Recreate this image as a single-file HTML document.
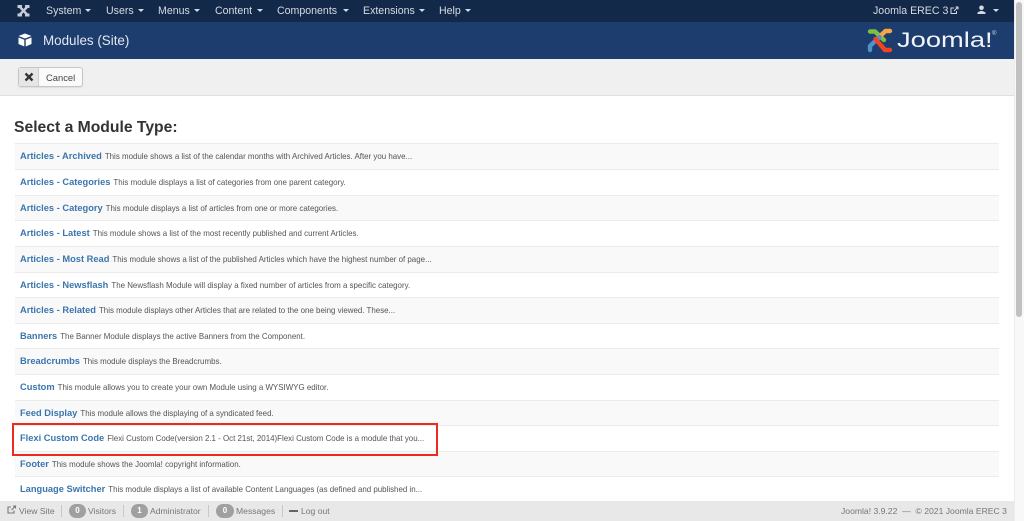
<!DOCTYPE html>
<html><head><meta charset="utf-8"><style>
html,body{margin:0;padding:0;width:1024px;height:521px;overflow:hidden;background:#fff;font-family:"Liberation Sans",sans-serif}
#w{position:absolute;left:0;top:0;width:1024px;height:521px;overflow:hidden;filter:blur(.35px)}
.a{position:absolute;white-space:nowrap}
#top{position:absolute;left:0;top:0;width:1014px;height:22px;background:#13294a}
#hdr{position:absolute;left:0;top:22px;width:1014px;height:37px;background:#1c3d6e}
#bar{position:absolute;left:0;top:59px;width:1014px;height:37px;background:#f0f0f0;border-bottom:1px solid #e0e0e0;box-sizing:border-box}
#sb{position:absolute;left:1014px;top:0;width:10px;height:521px;background:#f8f8f8;border-left:1px solid #ececec;box-sizing:border-box}
#th{position:absolute;left:1016px;top:2px;width:6px;height:315px;background:#c1c1c1;border-radius:3px}
.m{color:#d5dae2;font-size:10.6px;top:4px;line-height:14px}
.c{position:absolute;top:9px;width:0;height:0;border-left:3px solid transparent;border-right:3px solid transparent;border-top:3px solid #d5dae2}
.row{position:absolute;left:15px;width:984px;height:26px;border-top:1px solid #ebebeb;box-sizing:border-box;line-height:25px;padding-left:5px;white-space:nowrap;font-size:7.93px;color:#555}
.row.o{background:#f9f9f9}
.row b{font-size:9.3px;color:#3a76ad;margin-right:3px}
#ft{position:absolute;left:0;top:501px;width:1014px;height:20px;background:#e8e8e8;font-size:8.6px;color:#777}
.ft{position:absolute;top:5px;line-height:11px;white-space:nowrap}
.bd{position:absolute;top:3px;height:14px;border-radius:7px;background:#a0a0a0;color:#fff;text-align:center;line-height:14px;font-size:8px;font-weight:bold}
.sep{position:absolute;top:4px;width:1px;height:12px;background:#c8c8c8}
</style></head><body><div id="w">
<div id="top"></div><div id="hdr"></div><div id="bar"></div>
<div id="sb"></div><div id="th"></div>

<svg class="a" style="left:17px;top:4px" width="13" height="14" viewBox="0 0 13 14"><g fill="none" stroke="#c5ccd6" stroke-width="2.4"><path d="M2.500 2.500 L10.500 11 M10.500 2.500 L2.500 11"/></g><g fill="#c5ccd6"><rect x="0.500" y="1" width="4.500" height="3"/><rect x="8" y="1" width="4.500" height="3"/><rect x="0.500" y="9.500" width="4.500" height="3"/><rect x="8" y="9.500" width="4.500" height="3"/></g></svg>

<span class="a m" style="left:46px">System</span><i class="c" style="left:85px"></i>
<span class="a m" style="left:106px">Users</span><i class="c" style="left:138px"></i>
<span class="a m" style="left:158px">Menus</span><i class="c" style="left:194px"></i>
<span class="a m" style="left:215px">Content</span><i class="c" style="left:257px"></i>
<span class="a m" style="left:277px">Components</span><i class="c" style="left:343px"></i>
<span class="a m" style="left:363px">Extensions</span><i class="c" style="left:419px"></i>
<span class="a m" style="left:439px">Help</span><i class="c" style="left:465px"></i>

<span class="a m" style="left:873px">Joomla EREC 3</span>
<svg class="a" style="left:950px;top:6px" width="9" height="9" viewBox="0 0 9 9"><path d="M6.500 5v2.500h-5.500v-5.500h3M4 5l4-4M5.500 1h2.500v2.500" fill="none" stroke="#d5dae2" stroke-width="1"/></svg>
<svg class="a" style="left:977px;top:5px" width="9" height="10" viewBox="0 0 9 10"><circle cx="4.500" cy="2.800" r="2.300" fill="#d5dae2"/><path d="M0.500 9 v-1.500 l2.800-1.500 h2.400 l2.800 1.500 V9z" fill="#d5dae2"/></svg>
<i class="c" style="left:993px"></i>

<svg class="a" style="left:18px;top:33px" width="14" height="14" viewBox="0 0 14 14"><path d="M7 .5 L13.500 3 L7 5.500 L.5 3Z" fill="#fff"/><path d="M.5 4.500 L6.300 6.800 V13.500 L.5 11Z M13.500 4.500 L7.700 6.800 V13.500 L13.500 11Z" fill="#fff"/></svg>
<span class="a" style="left:43px;top:33px;font-size:13.4px;line-height:16px;color:#e4e8ee">Modules (Site)</span>

<svg class="a" style="left:866px;top:26px" width="28" height="28" viewBox="0 0 28 28"><g fill="none" stroke-width="4.400" stroke-linecap="round" stroke-linejoin="round"><path d="M4 5.500 L9 5.500 L18 14" stroke="#7ac143"/><path d="M24 5 L19.500 5 L10 14" stroke="#f9a541"/><path d="M4 24 L4 20 L13.500 11" stroke="#5091cd"/><path d="M24 24 L19 24 L9.500 13" stroke="#f44321"/></g></svg>
<span class="a" style="left:897px;top:28px;font-size:21px;line-height:26px;color:#f2f4f7;transform-origin:0 50%;transform:scaleX(1.3)">Joomla!</span>
<span class="a" style="left:992px;top:31px;font-size:6px;line-height:7px;color:#cfd6e0">®</span>

<div class="a" style="left:18px;top:67px;width:65px;height:20px;border:1px solid #c6c6c6;border-radius:3px;background:#fafafa;box-shadow:0 1px 1px rgba(0,0,0,.08);box-sizing:border-box"></div>
<div class="a" style="left:19px;top:68px;width:20px;height:18px;background:#e6e6e6;border-right:1px solid #cfcfcf;box-sizing:border-box"></div>
<svg class="a" style="left:24px;top:72px" width="10" height="10" viewBox="0 0 10 10"><path d="M1.500 1.500L8.500 8.500M8.500 1.500L1.500 8.500" stroke="#333" stroke-width="2.300"/></svg>
<span class="a" style="left:46px;top:72px;font-size:9.400px;line-height:11px;color:#444">Cancel</span>

<span class="a" style="left:14px;top:118px;font-size:15.700px;line-height:19px;font-weight:bold;color:#333">Select a Module Type:</span>

<div class="row o" style="top:143px"><b>Articles - Archived</b>This module shows a list of the calendar months with Archived Articles. After you have...</div>
<div class="row" style="top:169px"><b>Articles - Categories</b>This module displays a list of categories from one parent category.</div>
<div class="row o" style="top:195px"><b>Articles - Category</b>This module displays a list of articles from one or more categories.</div>
<div class="row" style="top:220px"><b>Articles - Latest</b>This module shows a list of the most recently published and current Articles.</div>
<div class="row o" style="top:246px"><b>Articles - Most Read</b>This module shows a list of the published Articles which have the highest number of page...</div>
<div class="row" style="top:272px"><b>Articles - Newsflash</b>The Newsflash Module will display a fixed number of articles from a specific category.</div>
<div class="row o" style="top:297px"><b>Articles - Related</b>This module displays other Articles that are related to the one being viewed. These...</div>
<div class="row" style="top:323px"><b>Banners</b>The Banner Module displays the active Banners from the Component.</div>
<div class="row o" style="top:348px"><b>Breadcrumbs</b>This module displays the Breadcrumbs.</div>
<div class="row" style="top:374px"><b>Custom</b>This module allows you to create your own Module using a WYSIWYG editor.</div>
<div class="row o" style="top:400px"><b>Feed Display</b>This module allows the displaying of a syndicated feed.</div>
<div class="row" style="top:425px"><b>Flexi Custom Code</b>Flexi Custom Code(version 2.1 - Oct 21st, 2014)Flexi Custom Code is a module that you...</div>
<div class="row o" style="top:451px"><b>Footer</b>This module shows the Joomla! copyright information.</div>
<div class="row" style="top:476px;height:25px"><b>Language Switcher</b>This module displays a list of available Content Languages (as defined and published in...</div>

<div class="a" style="left:12px;top:423px;width:426px;height:33px;border:2px solid #ee2a1e;box-sizing:border-box"></div>

<div id="ft">
<svg class="a" style="left:7px;top:4px" width="10" height="10" viewBox="0 0 10 10"><path d="M7 5.500v2.500h-6v-6h3M4.500 5l4-4M6 1h2.500v2.500" fill="none" stroke="#777" stroke-width="1.100"/></svg>
<span class="ft" style="left:19px">View Site</span><i class="sep" style="left:61px"></i>
<span class="bd" style="left:69px;width:17px">0</span><span class="ft" style="left:88px">Visitors</span><i class="sep" style="left:123px"></i>
<span class="bd" style="left:131px;width:17px">1</span><span class="ft" style="left:150px">Administrator</span><i class="sep" style="left:208px"></i>
<span class="bd" style="left:216px;width:18px">0</span><span class="ft" style="left:236px">Messages</span><i class="sep" style="left:282px"></i>
<span class="a" style="left:289px;top:9px;width:9px;height:2px;background:#666"></span><span class="ft" style="left:301px">Log out</span>
<span class="ft" style="left:841px">Joomla! 3.9.22 &nbsp;— &nbsp;© 2021 Joomla EREC 3</span>
</div>
</div></body></html>
